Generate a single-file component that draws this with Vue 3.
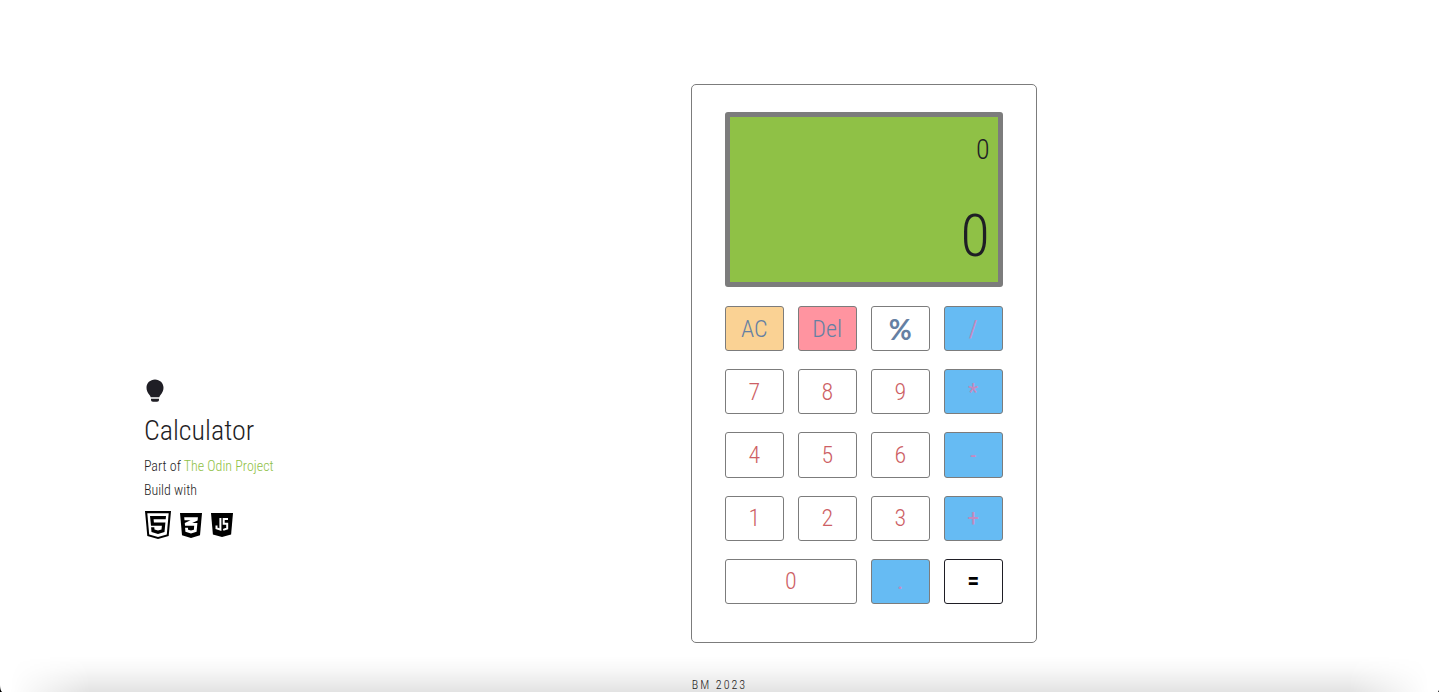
<script setup>
import { ref } from 'vue'

const previous = ref('0')
const current = ref('0')

const keys = [
  { label: 'AC', kind: 'clear' },
  { label: 'Del', kind: 'delete' },
  { label: '%', kind: 'percent' },
  { label: '/', kind: 'operator' },
  { label: '7', kind: 'digit' },
  { label: '8', kind: 'digit' },
  { label: '9', kind: 'digit' },
  { label: '*', kind: 'operator' },
  { label: '4', kind: 'digit' },
  { label: '5', kind: 'digit' },
  { label: '6', kind: 'digit' },
  { label: '-', kind: 'operator' },
  { label: '1', kind: 'digit' },
  { label: '2', kind: 'digit' },
  { label: '3', kind: 'digit' },
  { label: '+', kind: 'operator' },
  { label: '0', kind: 'digit wide' },
  { label: '.', kind: 'operator' },
  { label: '=', kind: 'equals' },
]

function press(key) {
  if (key.kind === 'clear') {
    current.value = '0'
    previous.value = '0'
  } else if (key.kind === 'delete') {
    current.value = current.value.slice(0, -1) || '0'
  } else if (key.kind.startsWith('digit')) {
    current.value = current.value === '0' ? key.label : current.value + key.label
  }
}
</script>

<template>
  <div class="page">
    <main class="layout">
      <section class="info">
        <svg class="bulb" viewBox="0 0 22 24" aria-hidden="true">
          <path d="M11 0.500C6.200 0.500 2.500 4.100 2.500 8.700C2.500 11.500 3.700 13.800 5.300 15.700C6.100 16.700 6.500 17.400 6.700 18.200H15.300C15.500 17.400 15.900 16.700 16.700 15.700C18.300 13.800 19.500 11.500 19.500 8.700C19.500 4.100 15.800 0.500 11 0.500Z" />
          <path d="M7 19.800H15V20.700C15 22 14.300 22.700 13 22.700H9C7.700 22.700 7 22 7 20.700Z" />
        </svg>
        <h1>Calculator</h1>
        <p>Part of <a href="#">The Odin Project</a></p>
        <p>Build with</p>
        <div class="logos">
          <svg class="html" viewBox="0 0 26 28" role="img" aria-label="HTML5">
            <path d="M0 0H26L23.700 25L13 28L2.300 25Z" />
            <path class="cut" d="M2.300 2.200H23.700L21.800 23.400L13 25.900L4.200 23.400Z" />
            <path d="M5 5H21L20.700 8.300H8.600L8.900 11.500H20.400L19.500 21L13 22.900L6.500 21L6.100 16.200H9.300L9.500 18.600L13 19.600L16.500 18.600L16.900 14.700H6L5 5Z" />
          </svg>
          <svg class="css" viewBox="0 0 22 25" role="img" aria-label="CSS3">
            <path d="M0 0H22L20 22.300L11 25L2 22.300Z" />
            <path class="cut" d="M4.200 4.300H17.900L17.600 7.600L12.200 10H17.400L16.600 18.700L11 20.500L5.400 18.700L5.100 14.800H7.900L8.100 16.700L11 17.600L13.900 16.700L14.200 12.800H5L4.800 10L10.500 7.200H4.500Z" />
          </svg>
          <svg class="js" viewBox="0 0 22 24" role="img" aria-label="JavaScript">
            <path d="M0 0H22L20.100 21.500L11 24L1.900 21.500Z" />
            <path class="line" d="M9.400 5V16.700L5.500 15.300V12.500M17 6.100H12.700V10.700H16.200V15.500L12.200 16.900" />
          </svg>
        </div>
      </section>

      <section class="calculator" aria-label="Calculator">
        <div class="screen">
          <output class="previous">{{ previous }}</output>
          <output class="current">{{ current }}</output>
        </div>
        <div class="keys">
          <button
            v-for="key in keys"
            :key="key.label"
            type="button"
            class="key"
            :class="key.kind"
            @click="press(key)"
          >{{ key.label }}</button>
        </div>
      </section>

      <footer>BM 2023</footer>
    </main>
    <div class="shade"></div>
    <svg class="corner left" viewBox="0 0 2 7" aria-hidden="true"><path d="M0 0Q0 5 2 7H0Z" /></svg>
    <svg class="corner right" viewBox="0 0 2 7" aria-hidden="true"><path d="M2 5V7H1Z" /></svg>
  </div>
</template>

<style>
body {
  margin: 0;
  background: #fff;
}
</style>

<style scoped>
.page {
  position: relative;
  box-sizing: border-box;
  min-height: 100vh;
  padding: 84px 10% 0;
  overflow: hidden;
  color: #1f1e25;
  font-family: "Roboto Condensed", "Liberation Sans", sans-serif;
  font-weight: 300;
}

.layout {
  display: grid;
  grid-template-columns: 19fr 21fr;
  align-items: end;
}

.info {
  padding-bottom: 104px;
}

.bulb {
  display: block;
  width: 22px;
  height: 24px;
  fill: #1f1e25;
}

h1 {
  margin: 9px 0 4px;
  font-size: 28px;
  font-weight: 300;
  line-height: 38px;
}

p {
  margin: 0;
  font-size: 14px;
  line-height: 24px;
}

a {
  color: #8fc146;
  text-decoration: none;
}

.logos {
  display: flex;
  align-items: center;
  gap: 9px;
  margin: 9px 0 0 1px;
}

.logos svg {
  display: block;
}

.html {
  width: 26px;
  height: 28px;
}

.css {
  width: 22px;
  height: 25px;
}

.js {
  width: 22px;
  height: 24px;
}

.cut {
  fill: #fff;
}

.line {
  fill: none;
  stroke: #fff;
  stroke-width: 2;
}

.calculator {
  box-sizing: border-box;
  width: 100%;
  max-width: 346px;
  padding: 27px 33px 38px;
  border: 1px solid #7c7c7c;
  border-radius: 5px;
}

.screen {
  display: flex;
  flex-direction: column;
  justify-content: space-between;
  box-sizing: border-box;
  height: 175px;
  margin-bottom: 19px;
  padding: 16px 8px;
  border: 5px solid #7c7c7c;
  border-radius: 3px;
  background: #8fc146;
  text-align: right;
}

.previous {
  font-size: 28px;
  line-height: 34px;
}

.current {
  font-size: 60px;
  line-height: 60px;
}

.keys {
  display: grid;
  grid-template-columns: repeat(4, 1fr);
  grid-auto-rows: 1fr;
  gap: 18px 14px;
  height: 298px;
}

.key {
  min-width: 0;
  padding: 0;
  border: 1px solid #7c7c7c;
  border-radius: 3px;
  background: #fff;
  color: #cd5f65;
  font-family: inherit;
  font-size: 24px;
  font-weight: 300;
  line-height: 28px;
  cursor: pointer;
}

.wide {
  grid-column: span 2;
}

.clear {
  background: #fad294;
  color: #6580a3;
}

.delete {
  background: #ff94a0;
  color: #6580a3;
}

.percent {
  color: #6580a3;
  font-family: Lato, sans-serif;
  font-size: 28px;
  font-weight: 700;
}

.operator {
  background: #66bbf3;
  color: #c48abf;
  font-weight: 400;
}

.equals {
  border-color: #1f1e25;
  color: #000;
  font-weight: 700;
}

footer {
  grid-column: 2;
  margin-top: 35px;
  padding-left: 1px;
  font-size: 12px;
  line-height: 14px;
  letter-spacing: 2px;
}

.shade {
  position: absolute;
  right: 0;
  bottom: 0;
  left: 0;
  height: 36px;
  background: linear-gradient(transparent, rgba(0, 0, 0, 0.03) 40%, rgba(0, 0, 0, 0.11));
  mask-image: linear-gradient(to right, transparent 10px, #000 90px, #000 calc(100% - 90px), transparent calc(100% - 10px));
  pointer-events: none;
}

.corner {
  position: absolute;
  bottom: 0;
  width: 2px;
  height: 7px;
}

.left {
  left: 0;
}

.right {
  right: 0;
}
</style>
